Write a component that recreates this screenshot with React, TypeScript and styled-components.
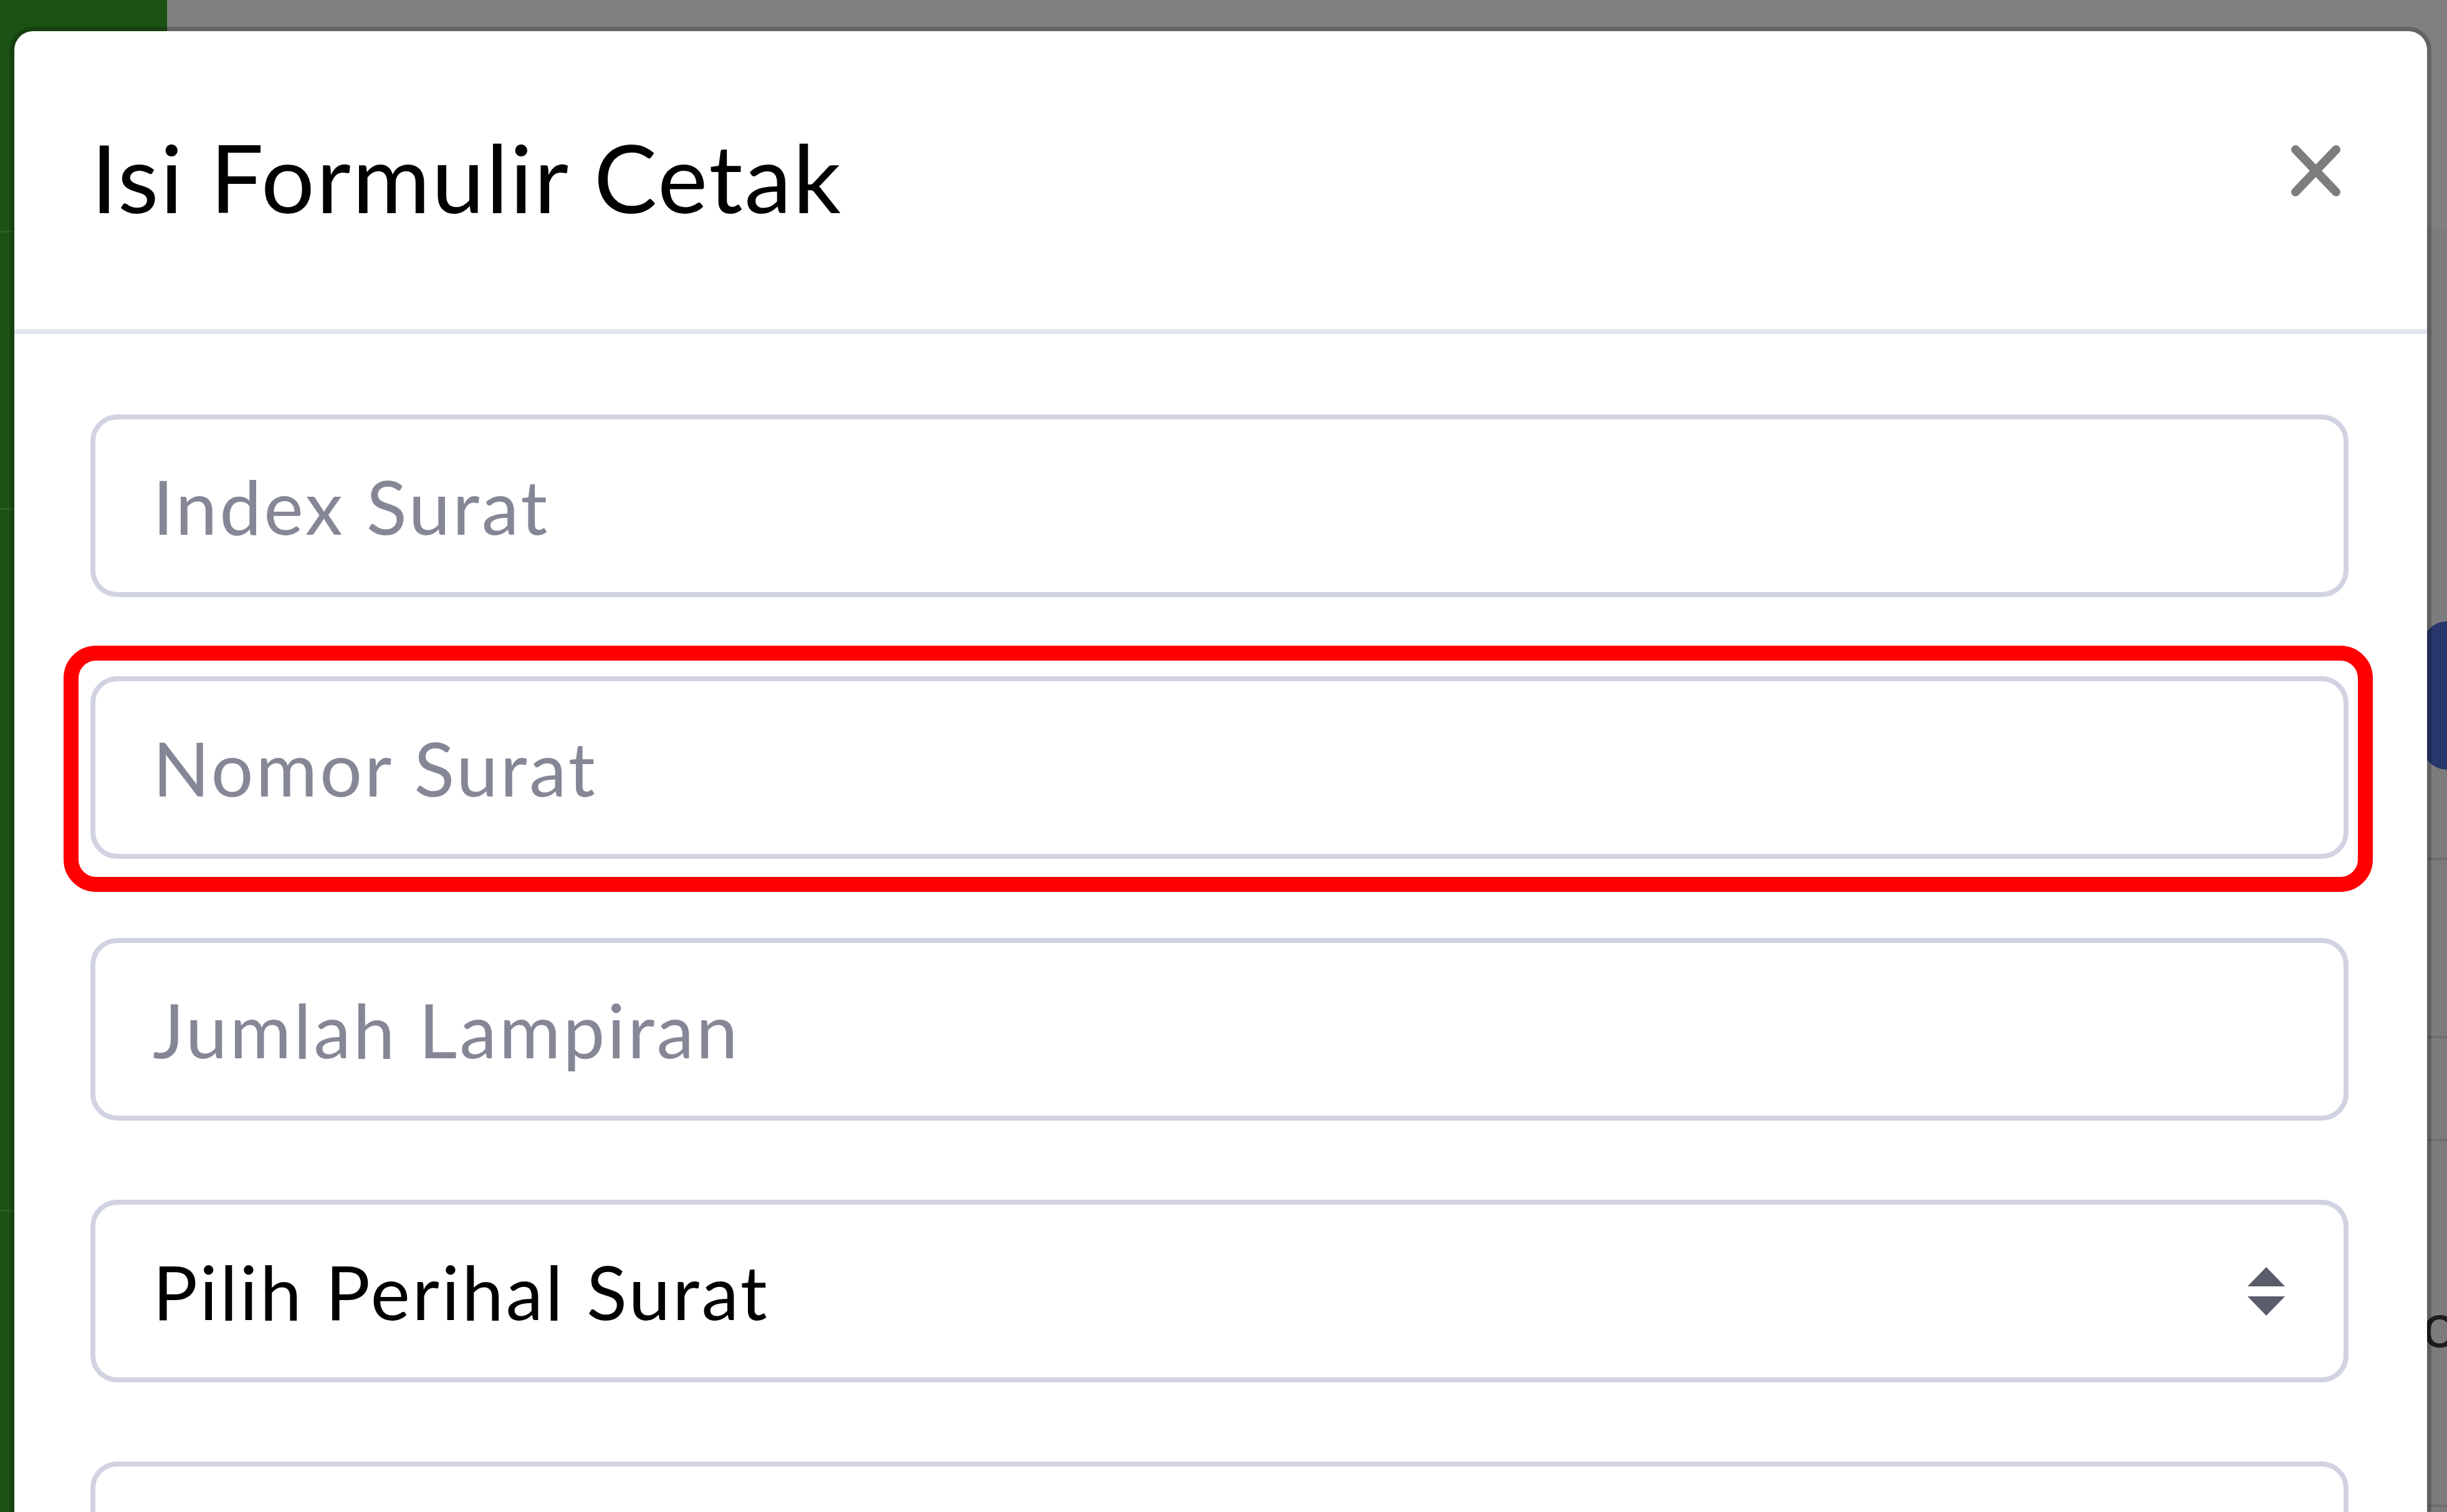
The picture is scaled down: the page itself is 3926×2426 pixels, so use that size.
import React from 'react';
import styled, { createGlobalStyle } from 'styled-components';

const GlobalStyle = createGlobalStyle`
  html, body {
    margin: 0;
    padding: 0;
  }
  body {
    width: 3926px;
    height: 2426px;
    overflow: hidden;
    background: #808080;
    font-family: Lato, "Open Sans", sans-serif;
  }
`;

const Stage = styled.div`
  position: relative;
  display: flex;
  width: 3926px;
  height: 2426px;
  overflow: hidden;
  background: #808080;
`;

const Sidebar = styled.aside`
  display: flex;
  flex-direction: column;
  width: 268px;
  background: #1b5314;
`;

const SidebarRow = styled.div<{ $h: number }>`
  height: ${({ $h }) => $h}px;
  flex: none;
  border-bottom: 3px solid rgba(255, 255, 255, 0.07);
`;

const Main = styled.main`
  flex: 1;
  display: flex;
  justify-content: flex-end;
`;

const RightEdge = styled.div`
  width: 40px;
  display: flex;
  flex-direction: column;
`;

const Topbar = styled.div`
  height: 366px;
  flex: none;
  background: #808080;
`;

const PageArea = styled.div`
  flex: 1;
  display: flex;
  flex-direction: column;
  padding-top: 631px;
  background: #7c7c7d;
`;

const ButtonStub = styled.div`
  height: 238px;
  flex: none;
  background: #27366b;
  border-radius: 40px 0 0 40px;
`;

const TableRow = styled.div<{ $h: number }>`
  height: ${({ $h }) => $h}px;
  flex: none;
  border-bottom: 4px solid #6e6e70;
  display: flex;
  align-items: center;
  overflow: hidden;
  font-size: 100px;
  color: #1d1d1d;
`;

const Modal = styled.div`
  position: absolute;
  left: 16px;
  top: 43px;
  width: 3885px;
  height: 2500px;
  box-sizing: border-box;
  background: #fff;
  background-clip: padding-box;
  border: 7px solid rgba(0, 0, 0, 0.22);
  border-radius: 37px;
  display: flex;
  flex-direction: column;
`;

const Header = styled.div`
  display: flex;
  align-items: flex-start;
  justify-content: space-between;
  padding: 117px 123px 129px 123px;
  border-bottom: 8px solid #e3e6f0;
`;

const Title = styled.h5`
  margin: 0;
  font-size: 152px;
  line-height: 232px;
  font-weight: 400;
  letter-spacing: 2.4px;
  color: #000;
`;

const CloseButton = styled.button`
  width: 81px;
  height: 84px;
  margin: 65px 15px 0 0;
  padding: 0;
  border: 0;
  background: transparent;
  display: flex;

  svg {
    display: block;
  }
`;

const Body = styled.div`
  display: flex;
  flex-direction: column;
  gap: 127px;
  padding: 129px 126px 0 122px;
`;

const Field = styled.input`
  width: 100%;
  height: 293px;
  box-sizing: border-box;
  padding: 0 92px;
  border: 8px solid #d1d3e2;
  border-radius: 43px;
  background: #fff;
  font-family: inherit;
  font-size: 120px;
  letter-spacing: 3.8px;
  color: #6e707e;
  outline: none;

  &::placeholder {
    color: #858796;
    opacity: 1;
  }
`;

const Highlight = styled.div`
  position: relative;

  &::after {
    content: '';
    position: absolute;
    top: -49px;
    left: -43px;
    right: -39px;
    bottom: -53px;
    border: 24px solid #ff0000;
    border-radius: 52px;
    pointer-events: none;
  }
`;

const SelectBox = styled.div`
  height: 293px;
  box-sizing: border-box;
  display: flex;
  align-items: center;
  justify-content: space-between;
  padding: 0 94px 0 92px;
  border: 8px solid #d1d3e2;
  border-radius: 43px;
  background: #fff;
  font-size: 120px;
  letter-spacing: 3.6px;
  color: #000;
`;

const CloseIcon = () => (
  <svg width="81" height="84" viewBox="0 0 81 84">
    <path
      d="M8 8 L73 76 M73 8 L8 76"
      stroke="#7d7d7d"
      strokeWidth="14"
      strokeLinecap="round"
      fill="none"
    />
  </svg>
);

const SelectArrows = () => (
  <svg width="60" height="78" viewBox="0 0 60 78">
    <path d="M30 0 L60 31 L0 31 Z M0 47 L60 47 L30 78 Z" fill="#5a5c69" />
  </svg>
);

const App: React.FC = () => {
  return (
    <>
      <GlobalStyle />
      <Stage>
        <Sidebar>
          <SidebarRow $h={370} />
          <SidebarRow $h={442} />
          <SidebarRow $h={1123} />
        </Sidebar>
        <Main>
          <RightEdge>
            <Topbar />
            <PageArea>
              <ButtonStub />
              <TableRow $h={141} />
              <TableRow $h={282} />
              <TableRow $h={161} />
              <TableRow $h={583}>o</TableRow>
            </PageArea>
          </RightEdge>
        </Main>

        <Modal>
          <Header>
            <Title>Isi Formulir Cetak</Title>
            <CloseButton aria-label="Close">
              <CloseIcon />
            </CloseButton>
          </Header>
          <Body>
            <Field placeholder="Index Surat" />
            <Highlight>
              <Field placeholder="Nomor Surat" />
            </Highlight>
            <Field placeholder="Jumlah Lampiran" />
            <SelectBox>
              <span>Pilih Perihal Surat</span>
              <SelectArrows />
            </SelectBox>
            <Field placeholder="" />
          </Body>
        </Modal>
      </Stage>
    </>
  );
};

export default App;
